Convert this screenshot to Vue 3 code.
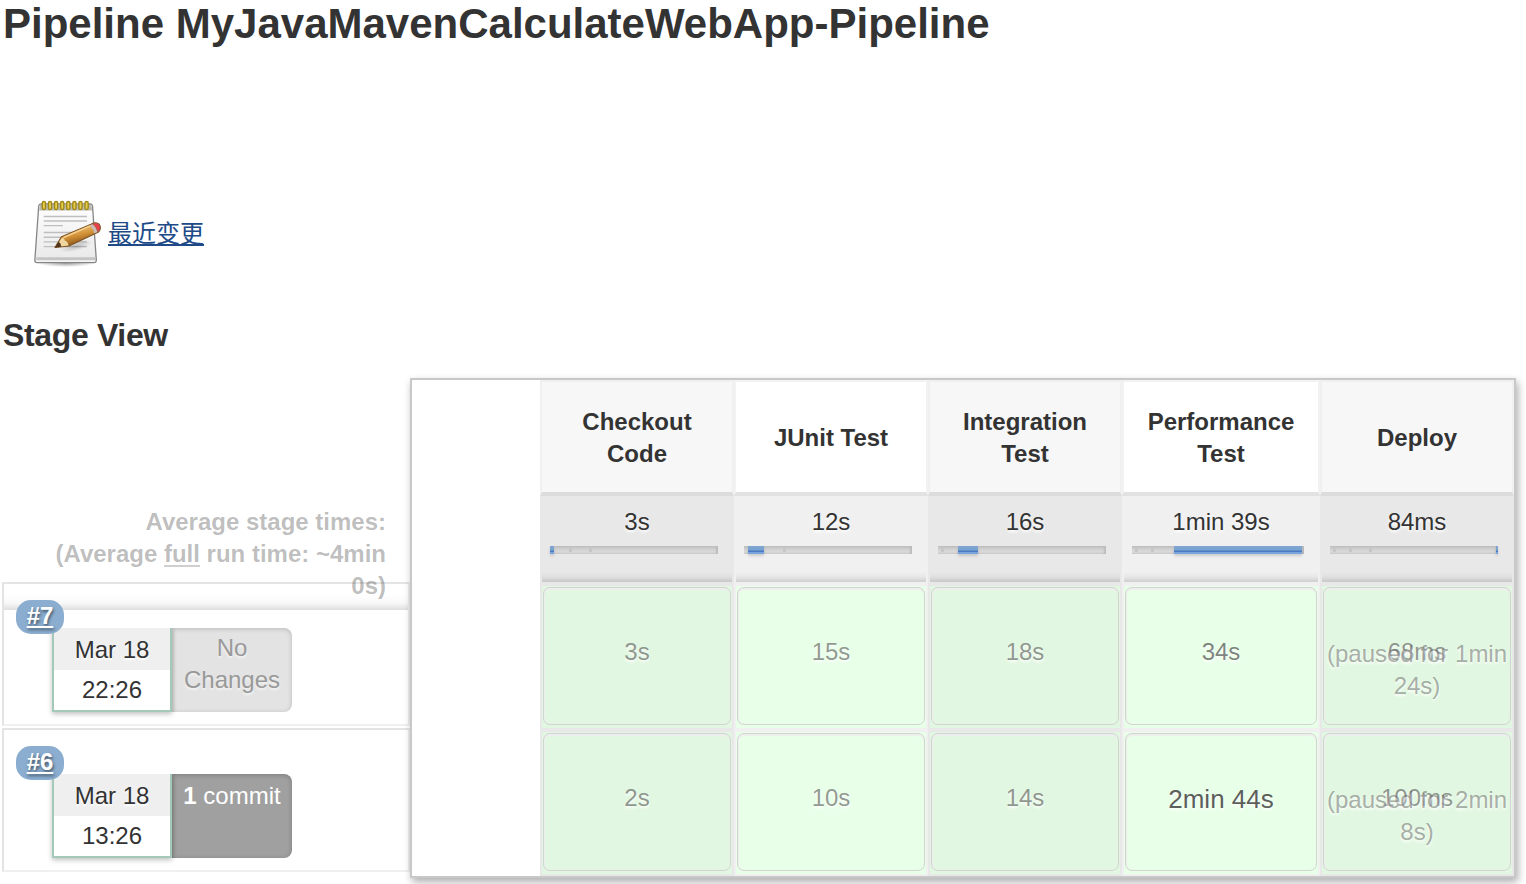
<script setup>
const stages = [
  { name: 'Checkout Code', avg: '3s', width: 194, track: 168, start: 0, fill: 4, marks: [19, 39], cells: [{ time: '3s' }, { time: '2s' }] },
  { name: 'JUnit Test', avg: '12s', width: 194, track: 168, start: 4, fill: 16, marks: [39], cells: [{ time: '15s' }, { time: '10s' }] },
  { name: 'Integration Test', avg: '16s', width: 194, track: 168, start: 20, fill: 20, marks: [3], cells: [{ time: '18s' }, { time: '14s' }] },
  { name: 'Performance Test', avg: '1min 39s', width: 198, track: 172, start: 42, fill: 128, marks: [3, 19], cells: [{ time: '34s' }, { time: '2min 44s', big: true }] },
  {
    name: 'Deploy', avg: '84ms', width: 194, track: 168, start: 166, fill: 2, marks: [3, 19, 39],
    cells: [{ time: '68ms', paused: '(paused for 1min 24s)' }, { time: '100ms', paused: '(paused for 2min 8s)' }]
  }
]
const runs = [
  { id: '#7', date: 'Mar 18', time: '22:26', commits: 0 },
  { id: '#6', date: 'Mar 18', time: '13:26', commits: 1 }
]
</script>

<template>
  <div class="page">
    <h1>Pipeline MyJavaMavenCalculateWebApp-Pipeline</h1>
    <div class="changes-link">
      <svg width="72" height="72" viewBox="0 0 72 72">
        <defs>
          <linearGradient id="paper" x1="0" y1="0" x2="0" y2="1">
            <stop offset="0" stop-color="#fff" /><stop offset="1" stop-color="#e8e8e8" />
          </linearGradient>
          <linearGradient id="wood" x1="0.4" y1="0.2" x2="0.65" y2="0.8">
            <stop offset="0" stop-color="#eebd70" /><stop offset="0.5" stop-color="#d18f35" /><stop offset="1" stop-color="#8f5a1c" />
          </linearGradient>
          <radialGradient id="ground"><stop offset="0" stop-color="#000" stop-opacity=".35" /><stop offset="1" stop-color="#000" stop-opacity="0" /></radialGradient>
        </defs>
        <ellipse cx="34" cy="65.500" rx="28" ry="3.500" fill="url(#ground)" />
        <path d="M9 6H58.500Q60.300 6 60.500 8L64.300 61.500Q64.500 64.700 62 64.700H5Q2.600 64.700 2.900 61.500L6.700 8Q7 6 9 6Z" fill="url(#paper)" stroke="#858585" stroke-width="1.300" />
        <path d="M8 6.700H59.500L60 12.500H7.200Z" fill="#b9b9ae" />
        <path d="M4.500 60.800H63" stroke="#c4c4c4" stroke-width="3" />
        <path d="M4.500 63.200H62.800" stroke="#f6f6f6" stroke-width="1.300" />
        <path d="M11.700 18.500H55M11.700 23H55M11.700 27.600H31M11.700 34.500H47M11.700 39.200H34M11.700 43.900H55M11.700 48.600H55" stroke="#bebebe" stroke-width="1.400" />
        <g fill="#e5cf4b" stroke="#a18719" stroke-width="1.400">
          <rect v-for="n in 8" :key="n" :x="4.200 + n * 6.100" y="3.500" width="3.200" height="8" rx="1.600" />
        </g>
        <ellipse cx="44" cy="48" rx="17" ry="5" fill="url(#ground)" opacity=".6" transform="rotate(-15 44 48)" />
        <path d="M23 49.500L29.500 38.800L59 26.300Q64 23.600 67.200 26.300Q70 30.500 66.500 34L37 48Z" fill="url(#wood)" stroke="#7d5223" stroke-width="1.200" stroke-linejoin="round" />
        <path d="M23.800 49L30 39.600Q32.500 40 33 42.800Q36 43.500 36.500 47.500Z" fill="#efd5a0" />
        <path d="M23 49.500L26.500 43.800Q29 45 29.300 48.800Z" fill="#51361b" />
        <path d="M31.500 39.500L58 28" stroke="#f5cf8c" stroke-width="1.500" />
        <path d="M57.500 27.600L61 26L66 33.800L62.200 35.500Q61.500 30.500 57.500 27.600Z" fill="#c9bcbc" />
        <path d="M60.700 26Q65.500 24 67.500 27.200Q69.500 31 65.700 33.800Q64.800 29 60.700 26Z" fill="#e9404c" stroke="#a1534c" stroke-width=".7" />
      </svg>
      <a>最近变更</a>
    </div>
    <h2>Stage View</h2>

    <div class="stage-view">
      <div class="left">
        <div class="averages">
          Average stage times:<br />(Average <span class="full">full</span> run time: ~4min 0s)
        </div>
        <div v-for="(run, i) in runs" :key="run.id" class="run" :class="{ first: i === 0 }">
          <div class="badge"><a>{{ run.id }}</a></div>
          <div class="info">
            <div class="date"><div class="day">{{ run.date }}</div><div class="hour">{{ run.time }}</div></div>
            <div v-if="run.commits" class="changes some"><b>{{ run.commits }}</b> commit</div>
            <div v-else class="changes none">No Changes</div>
          </div>
        </div>
      </div>

      <div class="panel">
        <div v-for="(s, i) in stages" :key="s.name" class="stage" :class="{ odd: i % 2 === 0 }" :style="{ width: s.width + 'px' }">
          <div class="head"><span>{{ s.name }}</span></div>
          <div class="average">
            <div class="avg-time">{{ s.avg }}</div>
            <div class="track" :style="{ width: s.track + 'px' }">
              <i v-for="m in s.marks" :key="m" class="mark" :style="{ left: m + 'px' }"></i>
              <i class="fill" :style="{ left: s.start + 'px', width: s.fill + 'px' }"></i>
            </div>
          </div>
          <div v-for="c in s.cells" :key="c.time" class="cell">
            <div class="box">
              <div class="time" :class="{ big: c.big }">{{ c.time }}</div>
              <div v-if="c.paused" class="paused">{{ c.paused }}</div>
            </div>
          </div>
        </div>
      </div>
    </div>
  </div>
</template>

<style>
body { margin: 0; background: #fff; overflow: hidden; }
</style>

<style scoped>
* { box-sizing: border-box; }
.page {
  width: 1526px; height: 884px; overflow: hidden; color: #333;
  font: 24px/32px "Liberation Sans", "Noto Sans CJK SC", sans-serif;
}
h1 { margin: 0 0 0 3px; height: 198px; font-size: 42px; line-height: 48px; white-space: nowrap; }
.changes-link { display: flex; height: 118px; padding-left: 32px; }
.changes-link a {
  margin: 20px 0 0 4px; color: #204a87; text-decoration: underline;
  text-decoration-thickness: 2px; text-underline-offset: 2px; height: 32px;
}
h2 { margin: 0 0 0 3px; height: 62px; font-size: 32px; line-height: 38px; letter-spacing: -.35px; }
.stage-view { display: flex; height: 506px; }
.left { width: 410px; flex: none; padding: 128px 0 0 2px; }
.averages {
  height: 76px; padding-right: 24px; padding-left: 40px; text-align: right;
  font-weight: bold; color: rgba(51, 51, 51, .32); position: relative; z-index: 1;
}
.full { border-bottom: 2px solid #cfcfcf; display: inline-block; line-height: 22px; }
.run {
  height: 144px; margin-bottom: 2px; border: 2px solid #e4e4e4;
  border-bottom-color: #f0f0f0; border-right-color: #eee; padding: 16px 0 0 12px;
}
.first { background: linear-gradient(to bottom, #fff 10px, #f8f8f8 19px, #dedede 26px, #fff 26px) no-repeat; }
.badge {
  width: 48px; height: 34px; border-radius: 15px; background: #8aadd0; color: #fff;
  text-align: center; font-weight: bold; line-height: 32px; position: relative; z-index: 1;
  text-shadow: 1px 2px 3px rgba(0, 0, 0, .5);
}
.badge a { text-decoration: underline; text-decoration-thickness: 2px; text-underline-offset: 2px; }
.info { display: flex; margin: -6px 0 0 36px; height: 84px; }
.date {
  width: 120px; border: 2px solid #a5c9b8; border-top: 0; background: #fff; text-align: center;
  box-shadow: 0 2px 5px rgba(0, 0, 0, .25); position: relative; clip-path: inset(0 -8px -8px -8px);
}
.day { height: 42px; line-height: 44px; background: #efefef; text-shadow: 0 2px 2px #fff; }
.hour { line-height: 40px; }
.changes { width: 120px; border-radius: 0 8px 8px 0; text-align: center; }
.none {
  background: #e3e3e3; color: #999; padding: 4px 8px; text-shadow: 0 2px 2px #f4f4f4;
  box-shadow: inset 0 1px 5px rgba(0, 0, 0, .18);
}
.some { background: #a0a0a0; color: #fff; padding-top: 6px; box-shadow: inset 0 1px 5px rgba(0, 0, 0, .22); }
.panel {
  width: 1106px; height: 500px; flex: none; display: flex; padding-left: 128px;
  border: 2px solid #c8c8c8; background: #fff; box-shadow: 2px 4px 8px rgba(0, 0, 0, .32);
  position: relative; z-index: 2;
}
.stage { flex: none; background: #f0f0f0; text-align: center; }
.stage.odd { background: #e8e8e8; }
.head {
  height: 116px; border: 2px solid #f2f2f2; border-bottom: 4px solid #e2e2e2; background: #fff;
  font-weight: bold; display: flex; align-items: center; justify-content: center; padding: 2px 20px 0;
}
.odd .head { background: #f7f7f7; border-color: #f0f0f0; border-bottom-color: #dcdcdc; }
.average {
  height: 86px; margin: 0 2px; padding: 10px 8px 0;
  background: linear-gradient(to bottom, rgba(0, 0, 0, 0) 76px, rgba(0, 0, 0, .04) 81px, rgba(0, 0, 0, .14));
}
.avg-time { height: 40px; text-shadow: 0 2px 3px #fff; }
.track {
  height: 8px; position: relative;
  background: linear-gradient(to bottom, #bcbcbc, #d0d0d0 3px, #dadada 6px, #e0e0e0 6px, #c8c8c8 7px, #d0d0d0);
  box-shadow: inset -3px 0 2px -1px #bbb;
}
.mark { position: absolute; top: 1px; width: 3px; height: 5px; background: #c6c6c6; }
.fill {
  position: absolute; top: 0; height: 8px;
  background: linear-gradient(to bottom, #7fa6d0, #7aa2d0 4px, #4a7bc3 5px, #4a7bc3 6px, #7aa4dc 6px);
  box-shadow: 0 2px 3px rgba(0, 0, 0, .15);
}
.cell { height: 142px; margin: 4px 2px 0; padding: 1px 1px 3px; background: #e8ffe8; }
.odd .cell { background: #e1f7e1; }
.box {
  height: 138px; border: 1px solid #d3d3d3; border-radius: 7px; position: relative; padding-top: 48px;
  box-shadow: inset 0 2px 1px #eee, inset 1px 0 1px #eee; text-shadow: 0 2px 3px #fff;
}
.time { color: rgba(51, 51, 51, .5); }
.stage:nth-child(4) .time { color: rgba(51, 51, 51, .62); }
.stage:nth-child(4) .big { font-size: 26px; line-height: 34px; color: rgba(51, 51, 51, .8); }
.paused { position: absolute; top: 50px; left: 0; right: 0; color: rgba(51, 51, 51, .4); }
</style>
